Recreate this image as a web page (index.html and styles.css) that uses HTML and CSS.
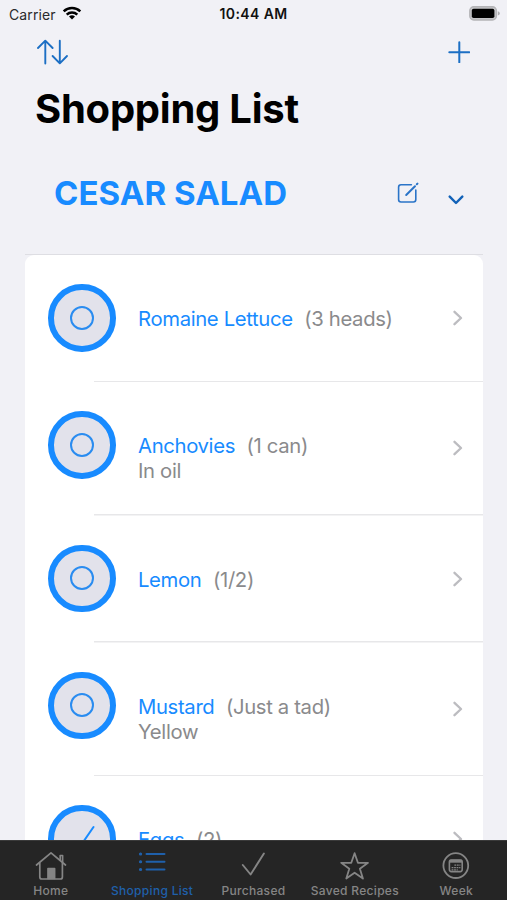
FILE: index.html
```html
<!DOCTYPE html>
<html lang="en">
<head>
  <meta charset="UTF-8">
  <meta name="viewport" content="width=device-width, initial-scale=1.0">
  <title>Shopping List</title>
  <link rel="stylesheet" href="styles.css">
</head>
<body>
  <div class="app">
    <div class="status-bar">
      <div class="carrier">
        <span class="carrier-name">Carrier</span>
        <svg width="20" height="16" viewBox="0 0 20 16" fill="none" stroke="#000" stroke-width="2.5">
          <path d="M1.7 6.4A12 12 0 0 1 18.3 6.4"/>
          <path d="M4.7 9.6A7.7 7.7 0 0 1 15.3 9.6"/>
          <path d="M10 14.6L7 11.6A4.4 4.4 0 0 1 13 11.6Z" fill="#000" stroke="none"/>
        </svg>
      </div>
      <div class="clock"><span>10:44 AM</span></div>
      <svg class="battery" width="32" height="16" viewBox="0 0 32 16">
        <rect x="0.8" y="0.8" width="26.6" height="13.2" rx="4" fill="#c4c4c7" stroke="#b4b4b7" stroke-width="1.4"/>
        <rect x="2.8" y="2.8" width="22.6" height="9.2" rx="1.8" fill="#000"/>
        <path d="M28.8 5.2Q30.8 5.8 30.8 7.4T28.8 9.6Z" fill="#adadb0"/>
      </svg>
    </div>

    <div class="toolbar">
      <svg width="32" height="26" viewBox="0 0 32 26" fill="none" stroke="#1c6fc4" stroke-width="1.9" stroke-linecap="round" stroke-linejoin="round">
        <path d="M8.3 24.5V2M1 9L8.3 1.7L15.6 9"/>
        <path d="M22.8 1.7V24M15.6 17L22.8 24.3L30 17"/>
      </svg>
      <svg width="22" height="22" viewBox="0 0 22 22" fill="none" stroke="#1c6fc4" stroke-width="2" stroke-linecap="round">
        <path d="M11.3 1.3V21.3M1.3 11.3H21.3"/>
      </svg>
    </div>

    <h1>Shopping List</h1>

    <div class="section-header">
      <h2>CESAR SALAD</h2>
      <svg class="edit" width="22" height="22" viewBox="0 0 22 22" fill="none" stroke="#2a74c8" stroke-width="1.6" stroke-linecap="round" stroke-linejoin="round">
        <path d="M14.4 2.8H4Q1.6 2.8 1.6 5.2V17.6Q1.6 20 4 20H16.4Q18.8 20 18.8 17.6V8"/>
        <path d="M9.2 13L18 4.2M19.8 2.3L20.5 1.6" stroke-width="2"/>
      </svg>
      <svg class="collapse" width="16" height="10" viewBox="0 0 16 10" fill="none" stroke="#1262b8" stroke-width="2.4" stroke-linecap="round" stroke-linejoin="round">
        <path d="M1.7 1.6L8 8L14.3 1.6"/>
      </svg>
    </div>

    <div class="list-wrap">
      <ul class="list">
        <li class="item">
          <div class="check"><span class="dot"></span></div>
          <div class="info"><span class="name">Romaine Lettuce</span><span class="qty">(3 heads)</span></div>
          <svg class="chevron" width="10" height="16" viewBox="0 0 10 16"><path d="M1.5 1.8L8 8L1.5 14.2"/></svg>
        </li>
        <li class="item tall">
          <div class="check"><span class="dot"></span></div>
          <div class="info"><span class="name">Anchovies</span><span class="qty">(1 can)</span><div class="note">In oil</div></div>
          <svg class="chevron" width="10" height="16" viewBox="0 0 10 16"><path d="M1.5 1.8L8 8L1.5 14.2"/></svg>
        </li>
        <li class="item">
          <div class="check"><span class="dot"></span></div>
          <div class="info"><span class="name">Lemon</span><span class="qty">(1/2)</span></div>
          <svg class="chevron" width="10" height="16" viewBox="0 0 10 16"><path d="M1.5 1.8L8 8L1.5 14.2"/></svg>
        </li>
        <li class="item tall">
          <div class="check"><span class="dot"></span></div>
          <div class="info"><span class="name">Mustard</span><span class="qty">(Just a tad)</span><div class="note">Yellow</div></div>
          <svg class="chevron" width="10" height="16" viewBox="0 0 10 16"><path d="M1.5 1.8L8 8L1.5 14.2"/></svg>
        </li>
        <li class="item">
          <div class="check">
            <svg width="28" height="28" viewBox="0 0 28 28" fill="none" stroke="#188bff" stroke-width="2" stroke-linecap="round" stroke-linejoin="round"><path d="M2.5 16L10 24.5L25.5 2"/></svg>
          </div>
          <div class="info"><span class="name">Eggs</span><span class="qty">(2)</span></div>
          <svg class="chevron" width="10" height="16" viewBox="0 0 10 16"><path d="M1.5 1.8L8 8L1.5 14.2"/></svg>
        </li>
      </ul>
    </div>

    <nav class="tabs">
      <div class="tab">
        <svg width="32" height="30" viewBox="0 0 32 30" fill="none" stroke="#858585" stroke-width="1.7" stroke-linecap="round" stroke-linejoin="round">
          <path d="M1.5 14L16 1.8L30.5 14"/>
          <path d="M4.8 12V26Q4.8 28 6.8 28H25.4Q27.4 28 27.4 26V12"/>
          <path d="M25.2 9V4.5H27.6V11"/>
          <path d="M13 17.5H19.6V27.5H13Z" fill="#858585"/>
        </svg>
        <span>Home</span>
      </div>
      <div class="tab active">
        <svg width="28" height="30" viewBox="0 0 28 30" fill="none" stroke="#1f60ab" stroke-width="2" stroke-linecap="round">
          <path d="M8.5 3H26.5M8.5 10.8H26.5M8.5 18.6H26.5"/>
          <path d="M2.4 3H2.7M2.4 10.8H2.7M2.4 18.6H2.7" stroke-width="3"/>
        </svg>
        <span>Shopping List</span>
      </div>
      <div class="tab">
        <svg width="28" height="30" viewBox="0 0 28 30" fill="none" stroke="#858585" stroke-width="1.9" stroke-linecap="round" stroke-linejoin="round">
          <path d="M3.8 14L11.6 23.5L24.9 2.5"/>
        </svg>
        <span>Purchased</span>
      </div>
      <div class="tab">
        <svg width="30" height="30" viewBox="0 0 30 30" fill="none" stroke="#858585" stroke-width="1.8" stroke-linejoin="round">
          <path d="M14.6 2.2L17.9 11.8H28L19.9 17.8L22.9 27.6L14.6 21.7L6.3 27.6L9.3 17.8L1.2 11.8H11.3Z"/>
        </svg>
        <span>Saved Recipes</span>
      </div>
      <div class="tab">
        <svg width="28" height="30" viewBox="0 0 28 30" fill="none" stroke="#858585" stroke-width="1.8">
          <circle cx="13.8" cy="14.6" r="12.4"/>
          <rect x="7.4" y="9" width="12.8" height="11.6" rx="2" stroke-width="1.6"/>
          <path d="M7.6 10.2H20" stroke-width="3"/>
          <path d="M12.4 14.2H18.4M9.6 16.6H18.4M9.6 18.8H15.8" stroke-width="1.2" stroke-dasharray="1.8 0.7"/>
        </svg>
        <span>Week</span>
      </div>
    </nav>
  </div>
</body>
</html>
```

FILE: styles.css
```css
* {
  box-sizing: border-box;
}
body {
  margin: 0;
  background: #f1f1f6;
  font-family: Inter, "Liberation Sans", sans-serif;
}
.app {
  display: flex;
  flex-direction: column;
  width: 507px;
  height: 900px;
  overflow: hidden;
}

/* status bar */
.status-bar {
  display: grid;
  grid-template-columns: 1fr 1fr 1fr;
  align-items: center;
  height: 28px;
  padding: 0 6px 0 9px;
  font-size: 14px;
}
.carrier {
  display: flex;
  align-items: center;
  gap: 6px;
  letter-spacing: 0.1px;
  color: #2a2a2c;
}
.carrier svg {
  margin-top: -3px;
}
.clock {
  margin-left: -3px;
  margin-top: -1px;
  text-align: center;
  font-weight: 600;
  letter-spacing: 0.4px;
  color: #111;
}
.battery {
  justify-self: end;
  margin-top: -1px;
}

/* header */
.toolbar {
  display: flex;
  justify-content: space-between;
  align-items: center;
  height: 48px;
  padding: 0 37px;
}
h1 {
  margin: 8px 0 0 35px;
  font-size: 40px;
  line-height: 50px;
  font-weight: 700;
  letter-spacing: -0.25px;
  color: #000;
}
.section-header {
  display: flex;
  align-items: center;
  height: 120px;
  padding: 0 43px 3px 54px;
}
h2 {
  flex: 1;
  margin: 0;
  font-size: 33px;
  font-weight: 700;
  letter-spacing: 0.05px;
  color: #188bff;
}
.edit {
  margin-right: 29px;
}
.collapse {
  margin-top: 15px;
}

/* list */
.list-wrap {
  flex: 1;
  min-height: 0;
  margin: 0 24px 0 25px;
  border-top: 1px solid #dedee3;
  overflow: hidden;
}
.list {
  margin: 0;
  padding: 0;
  list-style: none;
  background: #fff;
  border-radius: 9px 9px 0 0;
}
.item {
  display: flex;
  align-items: flex-start;
  height: 127px;
  padding: 29px 20px 0 23px;
  /* separator starts past the round button */
  background: linear-gradient(#e7e7e9, #e7e7e9) no-repeat 69px 100% / 100% 1.5px;
}
.item.tall {
  height: 133.5px;
}
.check {
  display: flex;
  align-items: center;
  justify-content: center;
  width: 67.5px;
  height: 67.5px;
  border: 6.5px solid #188bff;
  border-radius: 50%;
  background: #e2e2eb;
}
.dot {
  width: 24px;
  height: 24px;
  border: 2px solid #2a8cf0;
  border-radius: 50%;
}
.info {
  flex: 1;
  margin: 22px 0 0 22.5px;
  font-size: 20.3px;
  line-height: 25px;
  letter-spacing: -0.35px;
  color: #8a8a8c;
}
.name {
  margin-right: 11.5px;
  color: #188bff;
}
.chevron {
  margin-top: 26px;
  fill: none;
  stroke: #bcbcc0;
  stroke-width: 2.3;
  stroke-linecap: round;
  stroke-linejoin: round;
}
.tall .chevron {
  margin-top: 29px;
}

/* bottom tabs */
.tabs {
  display: grid;
  grid-template-columns: repeat(5, 1fr);
  height: 60px;
  background: #252525;
  border-top: 1px solid #3a3a3a;
}
.tab {
  display: flex;
  flex-direction: column;
  align-items: center;
  padding-top: 10px;
  font-size: 12px;
  line-height: 16px;
  font-weight: 500;
  letter-spacing: 0.3px;
  white-space: nowrap;
  color: #858585;
}
.tab span {
  margin-top: 2px;
}
.tab.active {
  color: #1f60ab;
}
```
